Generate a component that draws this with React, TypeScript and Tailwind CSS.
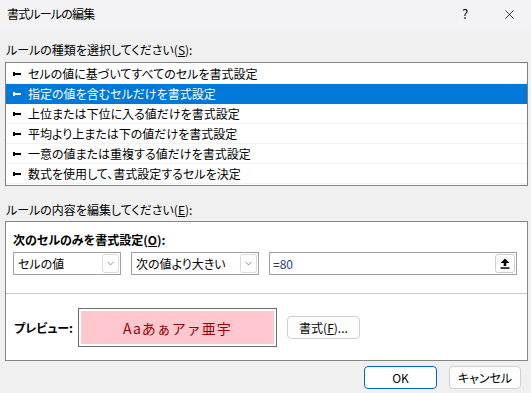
import React from 'react'
import { ChevronDown, X } from 'lucide-react'

const ruleTypes = [
  'セルの値に基づいてすべてのセルを書式設定',
  '指定の値を含むセルだけを書式設定',
  '上位または下位に入る値だけを書式設定',
  '平均より上または下の値だけを書式設定',
  '一意の値または重複する値だけを書式設定',
  '数式を使用して、書式設定するセルを決定',
]

const RuleBullet = ({ active }: { active: boolean }) => (
  <svg width="8" height="4" viewBox="0 0 8 4" className="shrink-0">
    <rect x="0" y="0" width="2" height="4" fill={active ? '#ffffff' : '#000000'} />
    <rect x="2" y="1" width="6" height="2" fill={active ? '#ffffff' : '#000000'} />
  </svg>
)

const Combo = ({ value, width }: { value: string; width: string }) => (
  <div className={`${width} h-[23px] flex items-center border border-[#a0a0a0] bg-white pl-[4px] pr-[1px]`}>
    <span className="flex-1 truncate">{value}</span>
    <div className="w-[17px] h-[19px] flex items-center justify-center border border-[#dcdcdc] rounded-[3px]">
      <ChevronDown size={11} strokeWidth={1.4} className="text-[#505050]" />
    </div>
  </div>
)

const App: React.FC = () => {
  return (
    <div className="w-[531px] h-[393px] flex flex-col bg-[#f0f0f0] text-[12px] leading-[16px] text-black font-['Noto_Sans_CJK_JP','Noto_Sans',sans-serif] [font-feature-settings:'palt'] overflow-hidden select-none">
      {/* title bar */}
      <div className="h-[30px] flex items-center bg-[#f3f3f5] shrink-0">
        <span className="pl-[7px] pb-[2px] tracking-[-0.8px]">書式ルールの編集</span>
        <div className="ml-auto flex h-full">
          <div className="w-[44px] flex items-center justify-center text-[13px] pb-[2px]">?</div>
          <div className="w-[44px] flex items-center justify-center pb-[2px]">
            <X size={15} strokeWidth={1.2} />
          </div>
        </div>
      </div>

      <div className="flex flex-col pl-[5px] pr-[3px]">
        <div className="mt-[12px] pl-[1px]">
          ルールの種類を選択してください(<span className="underline">S</span>):
        </div>

        <div className="mt-[4px] h-[124px] border border-[#7f7f7f] bg-white py-[1px]">
          {ruleTypes.map((rule, i) => {
            const active = i === 1
            return (
              <div
                key={rule}
                className={
                  active
                    ? 'h-[20px] flex items-center gap-[7px] pl-[7px] bg-[#0078d7] text-white'
                    : 'h-[20px] flex items-center gap-[7px] pl-[7px] border-b border-[#f2f2f2]'
                }
              >
                <RuleBullet active={active} />
                <span>{rule}</span>
              </div>
            )
          })}
        </div>

        <div className="mt-[16px] pl-[1px]">
          ルールの内容を編集してください(<span className="underline">E</span>):
        </div>

        <div className="mt-[3px] h-[140px] border border-[#858585] bg-white flex flex-col">
          <div className="h-[72px] flex flex-col px-[7px] border-b border-[#c8c8c8]">
            <div className="mt-[10px] font-bold">
              次のセルのみを書式設定(<span className="underline">O</span>):
            </div>
            <div className="mt-[4px] flex gap-[10px]">
              <Combo value="セルの値" width="w-[108px]" />
              <Combo value="次の値より大きい" width="w-[128px]" />
              <div className="w-[248px] h-[23px] flex items-center border border-[#a0a0a0] bg-white pl-[3px] pr-[1px]">
                <span className="flex-1">
                  =<span className="text-[#1f3f86]">80</span>
                </span>
                <div className="w-[20px] h-[19px] flex items-center justify-center border border-[#d0d0d0] rounded-[3px] bg-[#fdfdfd]">
                  <svg width="10" height="11" viewBox="0 0 10 11">
                    <path d="M5 0.5 L9.5 5 L6.3 5 L6.3 8 L3.7 8 L3.7 5 L0.5 5 Z" fill="#000" />
                    <rect x="0.5" y="9.3" width="9" height="1.5" fill="#000" />
                  </svg>
                </div>
              </div>
            </div>
          </div>

          <div className="flex-1 flex items-center pl-[8px] pt-[1px]">
            <span className="w-[64px] font-bold">プレビュー:</span>
            <div className="w-[199px] h-[39px] border border-[#6d6d6d] p-[2px] bg-white">
              <div className="h-full bg-[#ffc7ce] flex items-center justify-center text-[14px] text-[#9c0006] tracking-[1px] [font-feature-settings:normal] pt-[1px]">
                Aaあぁアァ亜宇
              </div>
            </div>
            <button className="ml-[10px] w-[73px] h-[23px] rounded-[4px] border border-[#d0d0d0] bg-[#fdfdfd] flex items-center justify-center">
              書式(<span className="underline">F</span>)...
            </button>
          </div>
        </div>

        <div className="mt-[5px] flex justify-end pr-[7px] gap-[12px]">
          <button className="w-[73px] h-[23px] rounded-[4px] border border-[#0067c0] bg-white flex items-center justify-center">
            OK
          </button>
          <button className="w-[72px] h-[23px] rounded-[4px] border border-[#d0d0d0] bg-[#fdfdfd] flex items-center justify-center">
            キャンセル
          </button>
        </div>
      </div>
    </div>
  )
}

export default App
